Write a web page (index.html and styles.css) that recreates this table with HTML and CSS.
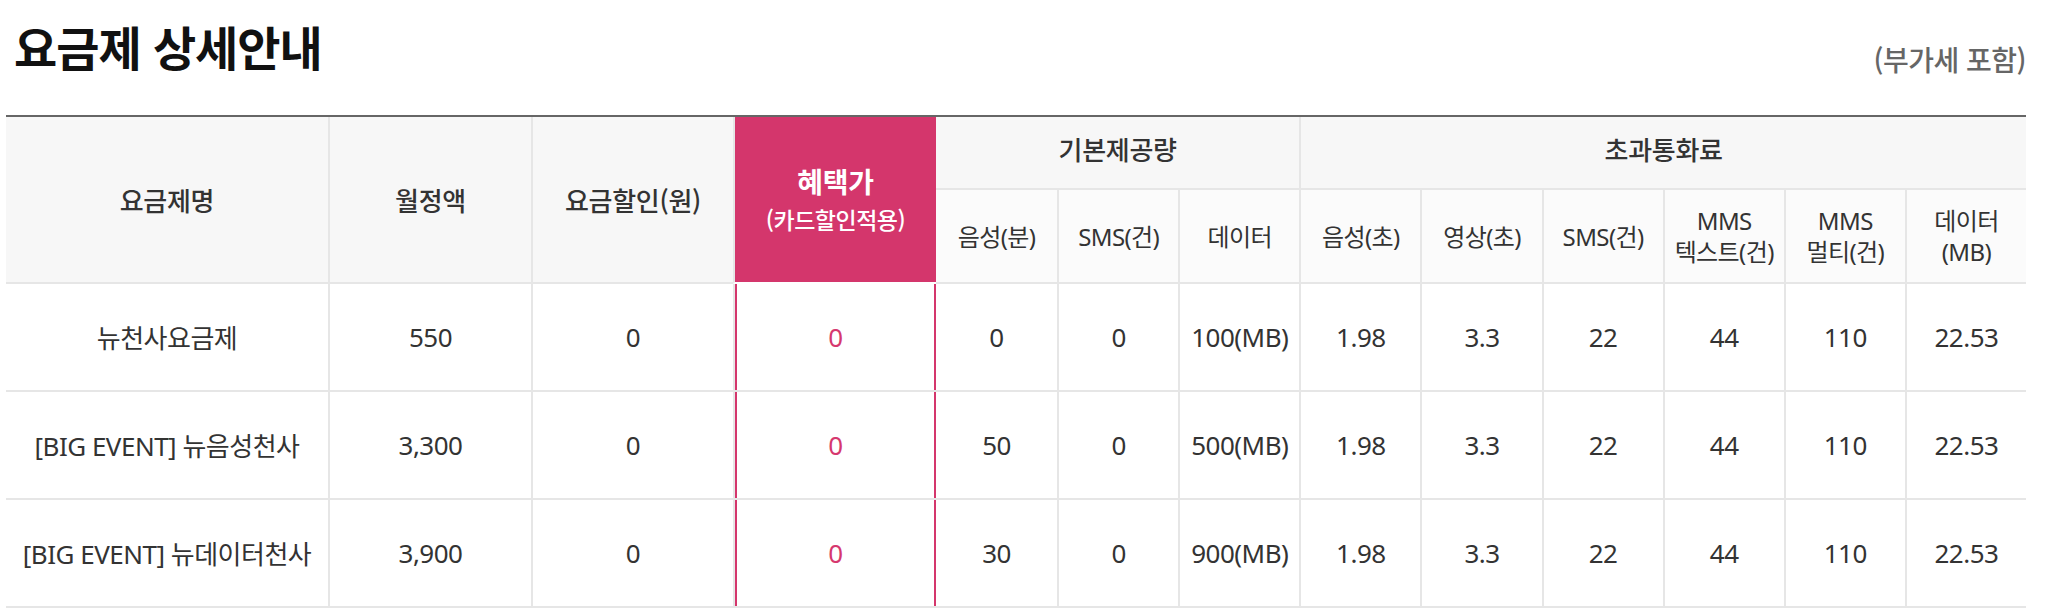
FILE: index.html
```html
<!DOCTYPE html>
<html lang="ko">
<head>
<meta charset="utf-8">
<title>요금제 상세안내</title>
<link rel="stylesheet" href="styles.css">
</head>
<body>
<div class="page">
  <div class="head">
    <h2 class="title">요금제 상세안내</h2>
    <span class="note">(부가세 포함)</span>
  </div>
  <div class="grid">
    <div class="th span2 nl">요금제명</div>
    <div class="th span2">월정액</div>
    <div class="th span2">요금할인(원)</div>
    <div class="th span2 pinkhead"><span class="ph1">혜택가</span><span class="ph2">(카드할인적용)</span></div>
    <div class="th group3 nl grp">기본제공량</div>
    <div class="th group6 grp">초과통화료</div>

    <div class="sub nl">음성(분)</div>
    <div class="sub">SMS(건)</div>
    <div class="sub">데이터</div>
    <div class="sub">음성(초)</div>
    <div class="sub">영상(초)</div>
    <div class="sub">SMS(건)</div>
    <div class="sub">MMS<br>텍스트(건)</div>
    <div class="sub">MMS<br>멀티(건)</div>
    <div class="sub">데이터<br>(MB)</div>

    <div class="td nl">뉴천사요금제</div>
    <div class="td">550</div>
    <div class="td">0</div>
    <div class="td pinkcell">0</div>
    <div class="td nl">0</div>
    <div class="td">0</div>
    <div class="td">100(MB)</div>
    <div class="td">1.98</div>
    <div class="td">3.3</div>
    <div class="td">22</div>
    <div class="td">44</div>
    <div class="td">110</div>
    <div class="td">22.53</div>

    <div class="td nl">[BIG EVENT] 뉴음성천사</div>
    <div class="td">3,300</div>
    <div class="td">0</div>
    <div class="td pinkcell">0</div>
    <div class="td nl">50</div>
    <div class="td">0</div>
    <div class="td">500(MB)</div>
    <div class="td">1.98</div>
    <div class="td">3.3</div>
    <div class="td">22</div>
    <div class="td">44</div>
    <div class="td">110</div>
    <div class="td">22.53</div>

    <div class="td nl">[BIG EVENT] 뉴데이터천사</div>
    <div class="td">3,900</div>
    <div class="td">0</div>
    <div class="td pinkcell">0</div>
    <div class="td nl">30</div>
    <div class="td">0</div>
    <div class="td">900(MB)</div>
    <div class="td">1.98</div>
    <div class="td">3.3</div>
    <div class="td">22</div>
    <div class="td">44</div>
    <div class="td">110</div>
    <div class="td">22.53</div>
  </div>
</div>
</body>
</html>
```
FILE: styles.css
```css
* { box-sizing: border-box; }
html, body {
  margin: 0;
  padding: 0;
  background: #fff;
}
body {
  font-family: "Noto Sans", "Noto Sans CJK KR", sans-serif;
  color: #333;
}
.page {
  width: 2026px;
  padding-left: 6px;
}
.head {
  height: 115px;
  display: flex;
  justify-content: space-between;
  align-items: flex-start;
}
.title {
  margin: 20px 0 0 8px;
  font-family: "Noto Sans CJK KR", sans-serif;
  font-size: 47px;
  line-height: 52px;
  font-weight: 700;
  letter-spacing: -1px;
  color: #111;
}
.note {
  margin-top: 43px;
  font-family: "Noto Sans CJK KR", sans-serif;
  font-size: 28px;
  line-height: 32px;
  font-weight: 500;
  color: #666;
  letter-spacing: -0.5px;
}
.grid {
  display: grid;
  grid-template-columns: 322px 203px 202px 203px repeat(9, 1fr);
  grid-template-rows: 73px 94px 108px 108px 108px;
  border-top: 2px solid #666;
}
.th, .sub, .td {
  display: flex;
  align-items: center;
  justify-content: center;
  text-align: center;
  border-bottom: 2px solid #e6e6e6;
  border-left: 2px solid #e6e6e6;
}
.nl { border-left: none; }
.th {
  background: #f7f7f7;
  font-family: "Noto Sans CJK KR", sans-serif;
  font-size: 26px;
  font-weight: 500;
  color: #333;
  letter-spacing: -0.3px;
}
.span2 { grid-row: span 2; }
.group3 { grid-column: span 3; }
.group6 { grid-column: span 6; }
.grp { padding-bottom: 8px; }
.pinkhead {
  background: #d4366c;
  color: #fff;
  flex-direction: column;
  border-bottom-color: #fff;
}
.ph1 {
  font-size: 28px;
  line-height: 38px;
  font-weight: 700;
}
.ph2 {
  font-size: 23px;
  line-height: 38px;
  font-weight: 500;
  letter-spacing: -0.5px;
}
.sub {
  background: #fbfbfb;
  font-size: 24px;
  line-height: 31px;
  font-weight: 400;
  color: #333;
  letter-spacing: -0.6px;
}
.td {
  font-size: 26px;
  font-weight: 400;
  color: #333;
  letter-spacing: -0.5px;
}
.pinkcell {
  color: #d6386e;
  box-shadow: inset 2px 0 0 #d4366c, inset -2px 0 0 #d4366c;
}
```
